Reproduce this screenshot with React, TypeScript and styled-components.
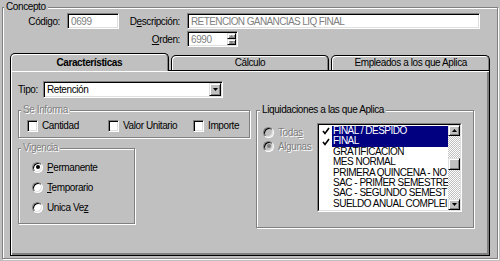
import styled, { createGlobalStyle } from 'styled-components';

const GlobalStyle = createGlobalStyle`
  html, body {
    margin: 0;
    padding: 0;
    background: #c0c0c0;
  }
  body {
    font-family: "Liberation Sans", Arial, sans-serif;
    font-size: 10px;
    letter-spacing: -0.4px;
    color: #000;
  }
  * {
    box-sizing: border-box;
  }
`;

const Screen = styled.div`
  width: 500px;
  height: 261px;
  overflow: hidden;
  padding: 7px 0 0 2px;
`;

const GroupBox = styled.div<{ $width?: number; $height: number }>`
  width: ${({ $width }) => ($width ? `${$width}px` : 'auto')};
  height: ${({ $height }) => $height}px;
  border: 1px solid #808080;
  box-shadow: inset 1px 1px #fff, 1px 1px #fff;
`;

const Legend = styled.div<{ $disabled?: boolean; $indent?: number }>`
  width: fit-content;
  height: 12px;
  margin: -7px 0 0 ${({ $indent }) => $indent ?? 1}px;
  padding: 0 2px;
  line-height: 12px;
  background: #c0c0c0;
  white-space: nowrap;
  color: ${({ $disabled }) => ($disabled ? '#808080' : '#000')};
  text-shadow: ${({ $disabled }) => ($disabled ? '1px 1px #fff' : 'none')};
`;

const Key = styled.u`
  text-decoration-thickness: 1px;
  text-underline-offset: 1px;
`;

const FieldGrid = styled.div`
  display: grid;
  grid-template-columns: 64px 52px 68px 293px;
  grid-auto-rows: 16px;
  row-gap: 2px;
  align-items: center;
`;

const Label = styled.label<{ $span?: string }>`
  grid-column: ${({ $span }) => $span ?? 'auto'};
  padding-right: 7px;
  text-align: right;
  white-space: nowrap;
`;

const TextBox = styled.div<{ $width?: number; $height?: number; $disabled?: boolean }>`
  display: flex;
  align-items: center;
  width: ${({ $width }) => ($width ? `${$width}px` : '100%')};
  height: ${({ $height }) => $height ?? 16}px;
  padding: 1px 1px 1px 2px;
  background: #fff;
  border: 1px solid;
  border-color: #808080 #fff #fff #808080;
  box-shadow: inset 1px 1px #000, inset -1px -1px #dfdfdf;
  color: ${({ $disabled }) => ($disabled ? '#808080' : '#000')};
  white-space: nowrap;
  overflow: hidden;
`;

const BoxText = styled.span<{ $caps?: boolean }>`
  flex: 1;
  padding-left: 1px;
  overflow: hidden;
  letter-spacing: ${({ $caps }) => ($caps ? '-0.6px' : 'inherit')};
`;

const SpinButtons = styled.div`
  display: flex;
  flex-direction: column;
  width: 9px;
  height: 100%;
`;

const RaisedButton = styled.div<{ $width?: number; $height: number }>`
  display: flex;
  align-items: center;
  justify-content: center;
  width: ${({ $width }) => ($width ? `${$width}px` : '100%')};
  height: ${({ $height }) => $height}px;
  flex-shrink: 0;
  background: #c0c0c0;
  border: 1px solid;
  border-color: #dfdfdf #000 #000 #dfdfdf;
  box-shadow: inset 1px 1px #fff, inset -1px -1px #808080;
`;

const Notebook = styled.div`
  width: 480px;
  margin: 6px 0 0 7px;
`;

const TabStrip = styled.div`
  display: flex;
  align-items: flex-end;
  gap: 2px;
  height: 17px;
`;

const Tab = styled.div<{ $active?: boolean }>`
  position: relative;
  z-index: ${({ $active }) => ($active ? 1 : 0)};
  flex: 1;
  height: ${({ $active }) => ($active ? 18 : 15)}px;
  margin-bottom: ${({ $active }) => ($active ? -1 : 0)}px;
  padding-top: ${({ $active }) => ($active ? 2 : 0)}px;
  border: 1px solid #000;
  border-bottom: none;
  border-radius: 5px 5px 0 0;
  background: #c0c0c0;
  box-shadow: inset 1px 1px #fff, inset -1px 0 #808080;
  text-align: center;
  line-height: 14px;
  font-weight: ${({ $active }) => ($active ? 700 : 400)};
  white-space: nowrap;
`;

const Panel = styled.div`
  height: 186px;
  padding: 10px 0 0 7px;
  border: 1px solid #000;
  box-shadow: inset 1px 1px #fff, inset -2px -2px #808080;
`;

const TipoRow = styled.div`
  display: flex;
  align-items: center;
  height: 17px;
`;

const TipoLabel = styled.label`
  width: 25px;
`;

const Columns = styled.div`
  display: flex;
  gap: 6px;
  margin-top: 12px;
`;

const LeftColumn = styled.div`
  display: flex;
  flex-direction: column;
  gap: 10px;
  width: 232px;
`;

const CheckRow = styled.div`
  display: grid;
  grid-template-columns: 81px 85px auto;
  margin: 3px 0 0 8px;
`;

const OptionItem = styled.div<{ $height: number; $disabled?: boolean }>`
  display: flex;
  align-items: center;
  gap: 4px;
  height: ${({ $height }) => $height}px;
  white-space: nowrap;
  color: ${({ $disabled }) => ($disabled ? '#808080' : '#000')};
  text-shadow: ${({ $disabled }) => ($disabled ? '1px 1px #fff' : 'none')};
`;

const CheckBox = styled.span`
  width: 11px;
  height: 12px;
  flex-shrink: 0;
  background: #fff;
  border: 1px solid;
  border-color: #808080 #fff #fff #808080;
  box-shadow: inset 1px 1px #000, inset -1px -1px #dfdfdf;
`;

const Radio = styled.span<{ $checked?: boolean; $disabled?: boolean }>`
  display: flex;
  align-items: center;
  justify-content: center;
  width: 11px;
  height: 11px;
  flex-shrink: 0;
  border-radius: 50%;
  background: ${({ $disabled }) => ($disabled ? '#c0c0c0' : '#fff')};
  border: 1px solid;
  border-color: #808080 #fff #fff #808080;
  box-shadow: inset 1px 1px #000, inset -1px -1px #dfdfdf;

  &::after {
    content: '';
    display: ${({ $checked }) => ($checked ? 'block' : 'none')};
    width: 4px;
    height: 4px;
    border-radius: 50%;
    background: ${({ $disabled }) => ($disabled ? '#808080' : '#000')};
  }
`;

const RadioColumn = styled.div`
  display: flex;
  flex-direction: column;
  padding: 3px 0 0 13px;
`;

const LiqBody = styled.div`
  display: flex;
  padding: 7px 0 0 6px;
`;

const LiqOptions = styled.div`
  display: flex;
  flex-direction: column;
  width: 54px;
  padding-top: 2px;
`;

const ListBox = styled.div`
  width: 145px;
  height: 89px;
  border: 1px solid;
  border-color: #808080 #fff #fff #808080;
`;

const ListInner = styled.div`
  display: flex;
  height: 100%;
  background: #fff;
  border: 1px solid;
  border-color: #000 #dfdfdf #dfdfdf #000;
`;

const ListItems = styled.div`
  flex: 1;
  min-width: 0;
  padding-top: 1px;
  overflow: hidden;
`;

const ListRow = styled.div`
  display: grid;
  grid-template-columns: 13px 1fr;
  height: 10.4px;
  line-height: 10.4px;
  letter-spacing: -0.5px;
`;

const CheckCell = styled.div`
  display: flex;
  align-items: center;
  justify-content: center;
`;

const ItemText = styled.div<{ $selected?: boolean }>`
  padding-left: 1px;
  background: ${({ $selected }) => ($selected ? '#000080' : 'transparent')};
  color: ${({ $selected }) => ($selected ? '#fff' : '#000')};
  white-space: nowrap;
  overflow: hidden;
`;

const ScrollBar = styled.div`
  display: flex;
  flex-direction: column;
  width: 12px;
  flex-shrink: 0;
`;

const ScrollTrack = styled.div`
  flex: 1;
  padding-top: 22px;
  background: repeating-conic-gradient(#c0c0c0 0 25%, #fff 0 50%) 0 0 / 2px 2px;
`;

const Arrow = ({ down, color = '#000' }: { down?: boolean; color?: string }) => (
  <svg width="5" height="3" viewBox="0 0 5 3">
    <path d={down ? 'M0 0H5L2.5 3Z' : 'M0 3H5L2.5 0Z'} fill={color} />
  </svg>
);

const CheckMark = () => (
  <svg width="8" height="8" viewBox="0 0 8 8">
    <path d="M1 4L3 6.5L7 1" fill="none" stroke="#000" strokeWidth="1.6" />
  </svg>
);

const liquidaciones = [
  { name: 'FINAL / DESPIDO', checked: true },
  { name: 'FINAL', checked: true },
  { name: 'GRATIFICACION' },
  { name: 'MES NORMAL' },
  { name: 'PRIMERA QUINCENA - NO' },
  { name: 'SAC - PRIMER SEMESTRE' },
  { name: 'SAC - SEGUNDO SEMEST' },
  { name: 'SUELDO ANUAL COMPLEI' },
];

export default function App() {
  return (
    <>
      <GlobalStyle />
      <Screen>
        <GroupBox $width={496} $height={252}>
          <Legend>Concepto</Legend>
          <FieldGrid>
            <Label>Código:</Label>
            <TextBox $width={52} $disabled>
              <BoxText>0699</BoxText>
            </TextBox>
            <Label>
              D<Key>e</Key>scripción:
            </Label>
            <TextBox $width={293} $disabled>
              <BoxText $caps>RETENCION GANANCIAS LIQ FINAL</BoxText>
            </TextBox>
            <Label $span="1 / 4">
              <Key>O</Key>rden:
            </Label>
            <TextBox $width={51} $disabled>
              <BoxText>6990</BoxText>
              <SpinButtons>
                <RaisedButton $height={6}>
                  <Arrow color="#808080" />
                </RaisedButton>
                <RaisedButton $height={6}>
                  <Arrow down color="#808080" />
                </RaisedButton>
              </SpinButtons>
            </TextBox>
          </FieldGrid>

          <Notebook>
            <TabStrip>
              <Tab $active>Características</Tab>
              <Tab>Cálculo</Tab>
              <Tab>Empleados a los que Aplica</Tab>
            </TabStrip>
            <Panel>
              <TipoRow>
                <TipoLabel>Tipo:</TipoLabel>
                <TextBox $width={180} $height={17}>
                  <BoxText>Retención</BoxText>
                  <RaisedButton $width={12} $height={13}>
                    <Arrow down />
                  </RaisedButton>
                </TextBox>
              </TipoRow>

              <Columns>
                <LeftColumn>
                  <GroupBox $width={232} $height={28}>
                    <Legend $disabled $indent={2}>
                      Se Informa
                    </Legend>
                    <CheckRow>
                      <OptionItem $height={13}>
                        <CheckBox />
                        Cantidad
                      </OptionItem>
                      <OptionItem $height={13}>
                        <CheckBox />
                        Valor Unitario
                      </OptionItem>
                      <OptionItem $height={13}>
                        <CheckBox />
                        Importe
                      </OptionItem>
                    </CheckRow>
                  </GroupBox>

                  <GroupBox $width={117} $height={76}>
                    <Legend $disabled $indent={2}>
                      Vigencia
                    </Legend>
                    <RadioColumn>
                      <OptionItem $height={20}>
                        <Radio $checked />
                        <span>
                          <Key>P</Key>ermanente
                        </span>
                      </OptionItem>
                      <OptionItem $height={20}>
                        <Radio />
                        <span>
                          <Key>T</Key>emporario
                        </span>
                      </OptionItem>
                      <OptionItem $height={20}>
                        <Radio />
                        <span>
                          Unica Ve<Key>z</Key>
                        </span>
                      </OptionItem>
                    </RadioColumn>
                  </GroupBox>
                </LeftColumn>

                <GroupBox $width={218} $height={118}>
                  <Legend $indent={3}>Liquidaciones a las que Aplica</Legend>
                  <LiqBody>
                    <LiqOptions>
                      <OptionItem $height={14} $disabled>
                        <Radio $disabled />
                        <span>
                          Toda<Key>s</Key>
                        </span>
                      </OptionItem>
                      <OptionItem $height={14} $disabled>
                        <Radio $disabled $checked />
                        Algunas
                      </OptionItem>
                    </LiqOptions>
                    <ListBox>
                      <ListInner>
                        <ListItems>
                          {liquidaciones.map((item) => (
                            <ListRow key={item.name}>
                              <CheckCell>{item.checked && <CheckMark />}</CheckCell>
                              <ItemText $selected={item.checked}>{item.name}</ItemText>
                            </ListRow>
                          ))}
                        </ListItems>
                        <ScrollBar>
                          <RaisedButton $height={11}>
                            <Arrow />
                          </RaisedButton>
                          <ScrollTrack>
                            <RaisedButton $height={12} />
                          </ScrollTrack>
                          <RaisedButton $height={11}>
                            <Arrow down />
                          </RaisedButton>
                        </ScrollBar>
                      </ListInner>
                    </ListBox>
                  </LiqBody>
                </GroupBox>
              </Columns>
            </Panel>
          </Notebook>
        </GroupBox>
      </Screen>
    </>
  );
}
